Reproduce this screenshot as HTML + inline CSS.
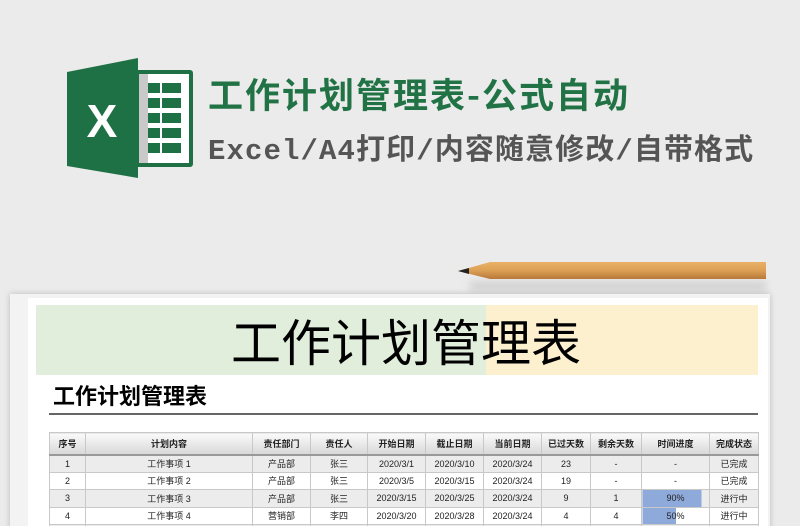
<!DOCTYPE html>
<html><head><meta charset="utf-8"><style>
*{margin:0;padding:0;box-sizing:border-box}
html,body{width:800px;height:526px;overflow:hidden}
body{background:#ebebeb;position:relative;font-family:"Liberation Sans","Noto Sans CJK SC",sans-serif}
.a{position:absolute}
table{border-collapse:collapse;position:absolute;left:49px;top:432px;width:709px;table-layout:fixed;font-size:9px;color:#222}
td{border:1px solid #c8c8c8;text-align:center;height:17.5px;padding:0;white-space:nowrap;overflow:hidden}
tr.h td{height:22px;background:linear-gradient(#fafafa,#d8d8d8);font-weight:bold;border-bottom:2px solid #999}
tr.g td{background:#ececec}
</style></head><body>
<svg class="a" style="left:60px;top:50px" width="140" height="140" viewBox="60 50 140 140">
<rect x="135" y="70" width="58" height="97" rx="3" fill="#1e7145"/>
<rect x="139" y="74" width="50" height="89" fill="#fff"/>
<rect x="139" y="74" width="9" height="89" fill="#c9c9c9"/>
<g fill="#1e7145">
<rect x="148" y="83" width="12" height="10"/><rect x="162" y="83" width="19" height="10"/>
<rect x="148" y="98" width="12" height="10"/><rect x="162" y="98" width="19" height="10"/>
<rect x="148" y="113" width="12" height="10"/><rect x="162" y="113" width="19" height="10"/>
<rect x="148" y="128" width="12" height="10"/><rect x="162" y="128" width="19" height="10"/>
<rect x="148" y="143" width="12" height="10"/><rect x="162" y="143" width="19" height="10"/>
</g>
<polygon points="67,72 138,58 138,178 67,166" fill="#1e7145"/>
<text x="102" y="137" font-family="Liberation Sans" font-weight="bold" font-size="46" fill="#fff" text-anchor="middle">X</text>
</svg>
<div class="a" style="left:208px;top:72px;font-size:35px;font-weight:bold;color:#217346;letter-spacing:2px;font-family:'Noto Sans CJK SC',sans-serif;line-height:44px;white-space:nowrap">工作计划管理表-公式自动</div>
<div class="a" style="left:208px;top:134px;font-size:29px;font-weight:bold;color:#555;letter-spacing:1.1px;font-family:'Liberation Mono','Noto Sans CJK SC',monospace;line-height:36px;white-space:nowrap">Excel/A4打印/内容随意修改/自带格式</div>
<div class="a" style="left:470px;top:282px;width:296px;height:8px;background:rgba(0,0,0,0.12);filter:blur(4px)"></div>
<svg class="a" style="left:455px;top:258px" width="315" height="26">
<defs><linearGradient id="p" x1="0" y1="0" x2="0" y2="1"><stop offset="0" stop-color="#e9b268"/><stop offset=".5" stop-color="#dca055"/><stop offset="1" stop-color="#b8783a"/></linearGradient></defs>
<polygon points="3,13 35,4 311,4 311,21 35,21" fill="url(#p)"/>
<polygon points="3,13 14,10 14,16" fill="#222"/>
</svg>
<div class="a" style="left:10px;top:294px;width:760px;height:240px;background:#f3f3f3;box-shadow:0 0 6px rgba(0,0,0,.2)"></div>
<div class="a" style="left:28px;top:298px;width:740px;height:240px;background:#fff"></div>
<div class="a" style="left:36px;top:305px;width:450px;height:70px;background:#e1eedb"></div>
<div class="a" style="left:486px;top:305px;width:272px;height:70px;background:#fdf0cf"></div>
<div class="a" style="left:36px;top:305px;width:740px;height:70px;text-align:center;font-size:50px;line-height:70px;color:#000;font-family:'Noto Sans CJK SC',sans-serif">工作计划管理表</div>
<div class="a" style="left:53px;top:380px;font-size:22px;font-weight:bold;color:#000;font-family:'Noto Sans CJK SC',sans-serif;line-height:30px">工作计划管理表</div>
<div class="a" style="left:49px;top:413px;width:709px;height:2px;background:#666"></div>
<table>
<colgroup><col style="width:36px"><col style="width:167px"><col style="width:58px"><col style="width:57px"><col style="width:58px"><col style="width:58px"><col style="width:58px"><col style="width:49px"><col style="width:51px"><col style="width:68px"><col style="width:49px"></colgroup>
<tr class="h"><td>序号</td><td>计划内容</td><td>责任部门</td><td>责任人</td><td>开始日期</td><td>截止日期</td><td>当前日期</td><td>已过天数</td><td>剩余天数</td><td>时间进度</td><td>完成状态</td></tr>
<tr class="g"><td>1</td><td>工作事项 1</td><td>产品部</td><td>张三</td><td>2020/3/1</td><td>2020/3/10</td><td>2020/3/24</td><td>23</td><td>-</td><td>-</td><td>已完成</td></tr>
<tr><td>2</td><td>工作事项 2</td><td>产品部</td><td>张三</td><td>2020/3/5</td><td>2020/3/15</td><td>2020/3/24</td><td>19</td><td>-</td><td>-</td><td>已完成</td></tr>
<tr class="g"><td>3</td><td>工作事项 3</td><td>产品部</td><td>张三</td><td>2020/3/15</td><td>2020/3/25</td><td>2020/3/24</td><td>9</td><td>1</td><td style="background:linear-gradient(90deg,#8eaadb 88%,#ececec 88%)">90%</td><td>进行中</td></tr>
<tr><td>4</td><td>工作事项 4</td><td>营销部</td><td>李四</td><td>2020/3/20</td><td>2020/3/28</td><td>2020/3/24</td><td>4</td><td>4</td><td style="background:linear-gradient(90deg,#8eaadb 50%,#fff 50%)">50%</td><td>进行中</td></tr>
<tr class="g"><td>5</td><td></td><td></td><td></td><td></td><td></td><td></td><td></td><td></td><td></td><td></td></tr>
</table>
</body></html>
